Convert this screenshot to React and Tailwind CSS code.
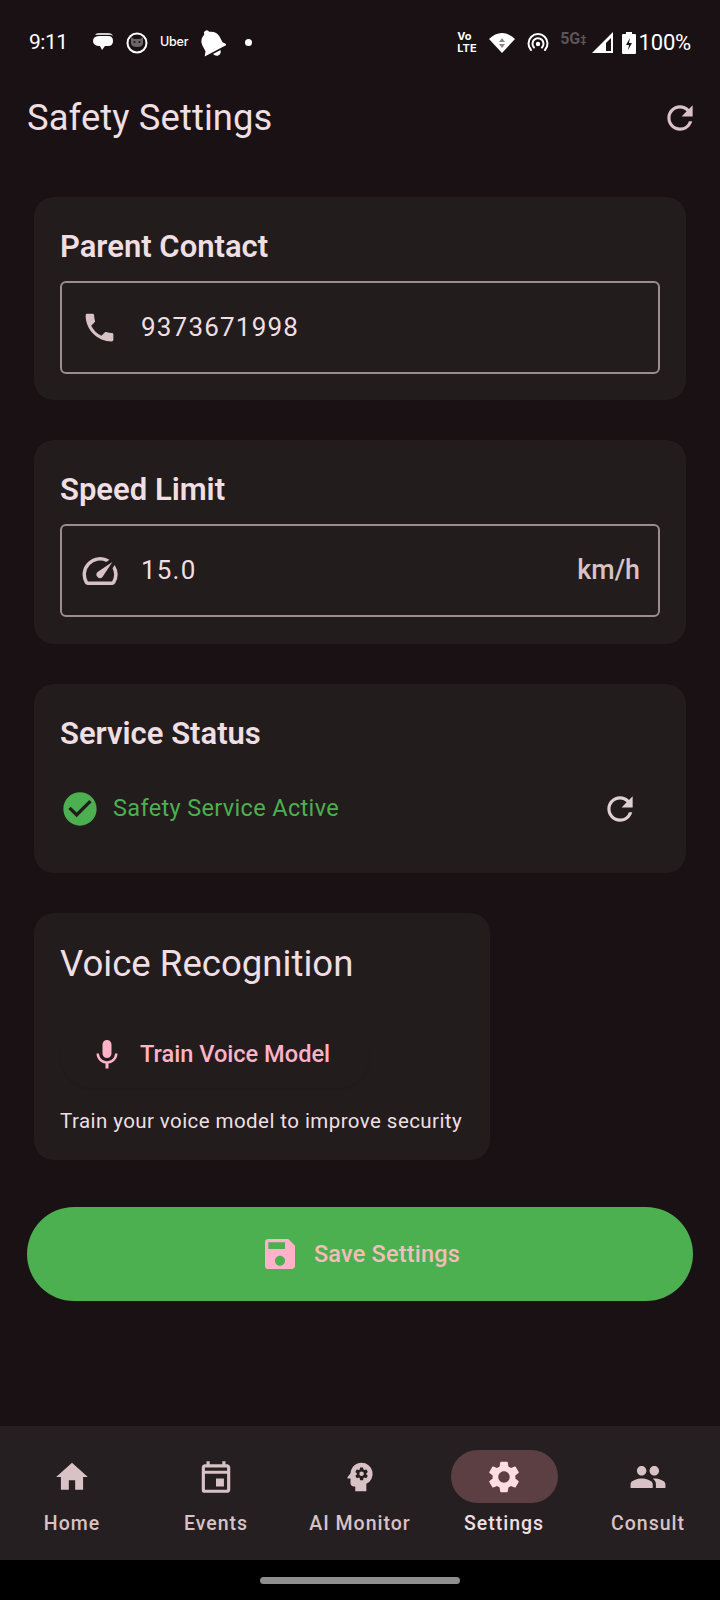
import React from 'react';
import { MdPhone, MdOutlineSpeed, MdRefresh, MdCheckCircle, MdMic, MdSave, MdHome, MdOutlineEvent, MdPsychology, MdSettings, MdPeople } from 'react-icons/md';

const NAV_ITEMS = [
    { label: 'Home', icon: MdHome },
    { label: 'Events', icon: MdOutlineEvent },
    { label: 'AI Monitor', icon: MdPsychology },
    { label: 'Settings', icon: MdSettings, active: true },
    { label: 'Consult', icon: MdPeople },
];

function StatusBar() {
    return (
        <div className="h-[84px] flex items-center justify-between pl-[29px] pr-[29px] pt-[1px] text-white shrink-0">
            <div className="flex items-center">
                <span className="text-[21px] tracking-[-0.5px] font-['Roboto',sans-serif] w-[62px]">9:11</span>
                {/* chat */}
                <svg width="23" height="22" viewBox="0 0 23 22" className="mr-[12px]">
                    <path d="M4 3 Q5 1 8 1 H17 Q21 1 22 4 L20 3 H7 Q5 3 4 3Z" fill="#fff" opacity="0.8" />
                    <path d="M9 4 H17 Q22 4 22 9 Q22 14 17 14 H14 L11 18 L9 14 Q2 14 2 9 Q2 4 9 4Z" fill="#fff" />
                </svg>
                {/* cat face */}
                <svg width="22" height="22" viewBox="0 0 22 22" className="mr-[12px]">
                    <circle cx="11" cy="11" r="9.5" fill="none" stroke="#fff" strokeWidth="2" />
                    <path d="M5 5 L8 7 H14 L17 5 L17 11 Q17 15 11 15 Q5 15 5 11Z" fill="#6a6567" />
                    <circle cx="8.5" cy="10" r="1" fill="#191114" />
                    <circle cx="13.5" cy="10" r="1" fill="#191114" />
                </svg>
                <span className="text-[12.5px] leading-none font-['Inter',sans-serif] font-medium mr-[10px] tracking-[-0.2px]">Uber</span>
                {/* bell */}
                <svg width="28" height="30" viewBox="0 0 26 28" className="mr-[19px] mt-[1px]">
                    <g transform="rotate(-28 13 14)">
                        <path d="M13 1 Q15.5 1 15.5 3.5 Q22 6 22 12 V18 L25 22 H1 L4 18 V12 Q4 6 10.5 3.5 Q10.5 1 13 1Z" fill="#fff" />
                        <path d="M9 23.5 H17 Q16 27 13 27 Q10 27 9 23.5Z" fill="#fff" />
                    </g>
                </svg>
                <span className="w-[7px] h-[7px] rounded-full bg-white" />
            </div>
            <div className="flex items-center">
                <div className="flex flex-col items-start leading-none font-bold font-['Inter',sans-serif] text-[11px] mr-[9px] w-[23px]">
                    <span className="leading-[11px]">Vo</span>
                    <span className="leading-[12px] tracking-[0.2px]">LTE</span>
                </div>
                <svg width="26" height="20" viewBox="0 0 26 20" className="mr-[12px]">
                    <path d="M13 20 L0 6 Q6 0 13 0 Q20 0 26 6Z" fill="#fff" />
                    <path d="M13 5 L16 9 H10Z M10 11 H16 L13 15Z" fill="#8b8587" />
                </svg>
                <svg width="22" height="20" viewBox="0 0 22 20" className="mr-[11px]" fill="none" stroke="#fff" strokeWidth="2" strokeLinecap="round">
                    <path d="M4 17 A9.5 9.5 0 1 1 18 17" />
                    <path d="M7 14.5 A5.5 5.5 0 1 1 15 14.5" />
                    <circle cx="11" cy="11" r="1.2" fill="#fff" />
                </svg>
                <span className="text-[16px] font-bold font-['Roboto',sans-serif] text-[#5a5558] -mt-[7px] leading-none">5G</span>
                <span className="text-[11px] font-bold font-['Roboto',sans-serif] text-[#5a5558] mr-[5px] -mt-[7px] leading-none">‡</span>
                <svg width="22" height="22" viewBox="0 0 22 22" className="mr-[8px]">
                    <path d="M21 0 V21 H0Z" fill="#fff" />
                    <path d="M19 6 V19 H14 V11Z" fill="#191114" />
                </svg>
                <svg width="14" height="22" viewBox="0 0 14 22" className="mr-[3px]">
                    <path d="M4 0 H10 V2 H13 Q14 2 14 3 V21 Q14 22 13 22 H1 Q0 22 0 21 V3 Q0 2 1 2 H4Z" fill="#fff" />
                    <path d="M8 6 L4 13 H7 L6 18 L10 11 H7Z" fill="#191114" />
                </svg>
                <span className="text-[22px] font-['Roboto',sans-serif] tracking-[-0.2px]">100%</span>
            </div>
        </div>
    );
}

function Card({ title, children, className = '' }) {
    return (
        <div className={`bg-[#221c1d] rounded-[20px] px-[26px] ${className}`}>
            <h2 className="text-[31px] leading-[40px] font-semibold text-[#efdfe2] pt-[30px] box-content">{title}</h2>
            {children}
        </div>
    );
}

function OutlinedField({ icon: Icon, value, suffix, iconSize = 37 }) {
    return (
        <div className="mt-[14px] h-[93px] border-2 border-[#9d8c8f] rounded-[6px] flex items-center pl-[19px] pr-[18px]">
            <div className="w-[37px] flex justify-center shrink-0">
                <Icon size={iconSize} className="text-[#d8c2c6] shrink-0" />
            </div>
            <span className="ml-[23px] text-[26px] tracking-[1.2px] text-[#efdfe2]">{value}</span>
            {suffix && <span className="ml-auto text-[26.8px] font-medium text-[#d8c2c6]">{suffix}</span>}
        </div>
    );
}

export default function App() {
    return (
        <div className="w-[720px] h-[1600px] flex flex-col bg-[#191114] font-['Roboto',sans-serif] overflow-hidden">
            <StatusBar />

            <div className="flex items-center justify-between px-[27px] h-[64px] mt-[2px] shrink-0">
                <h1 className="text-[36.4px] text-[#efdfe2] leading-none tracking-[0.1px]">Safety Settings</h1>
                <MdRefresh size={38} className="text-[#d8c2c6] mr-[-6px]" />
            </div>

            <main className="flex-1 flex flex-col pt-[47px]">
                <div className="px-[34px] flex flex-col gap-[40px]">
                    <Card title="Parent Contact" className="pb-[26px]">
                        <OutlinedField icon={MdPhone} value="9373671998" />
                    </Card>
                    <Card title="Speed Limit" className="pb-[27px]">
                        <OutlinedField icon={MdOutlineSpeed} value="15.0" suffix="km/h" iconSize={42} />
                    </Card>
                    <Card title="Service Status" className="pb-[32px]">
                        <div className="mt-[23px] flex items-center h-[64px]">
                            <MdCheckCircle size={40} className="text-[#4caf50] shrink-0" />
                            <span className="ml-[13px] text-[23.5px] tracking-[0.35px] text-[#4caf50]">Safety Service Active</span>
                            <MdRefresh size={38} className="ml-auto mr-[21px] text-[#e0d0d3]" />
                        </div>
                    </Card>
                    <div className="bg-[#221c1d] rounded-[20px] px-[26px] w-[456px] h-[247px]">
                        <h2 className="text-[36.6px] leading-[44px] text-[#efdfe2] pt-[29px] box-content">Voice Recognition</h2>
                        <div className="mt-[36px] h-[66px] flex items-center pl-[29px] w-[310px] rounded-full shadow-[0_2px_2px_rgba(0,0,0,0.07)]">
                            <MdMic size={36} className="text-[#ffb2c8] shrink-0" />
                            <span className="ml-[15px] text-[23.6px] font-medium text-[#ffb2c8]">Train Voice Model</span>
                        </div>
                        <p className="mt-[18px] text-[20.5px] tracking-[0.43px] text-[#efdfe2] whitespace-nowrap">Train your voice model to improve security</p>
                    </div>
                </div>

                <div className="px-[27px] mt-[47px]">
                    <button className="w-full h-[94px] rounded-full bg-[#4caf50] flex items-center justify-center">
                        <MdSave size={40} className="text-[#ffb2c8]" />
                        <span className="ml-[14px] mt-[2px] text-[23.5px] font-medium tracking-[0.2px] text-[#f4bdb9]">Save Settings</span>
                    </button>
                </div>
            </main>

            <nav className="h-[134px] bg-[#261f21] flex items-start justify-between shrink-0 pt-[24px]">
                {NAV_ITEMS.map(({ label, icon: Icon, active }) => (
                    <div key={label} className="flex-1 flex flex-col items-center">
                        <div className={`w-[107px] h-[53px] rounded-full flex items-center justify-center ${active ? 'bg-[#5b3f43]' : ''}`}>
                            <Icon size={38} className={active ? 'text-[#ffdde2]' : 'text-[#d8c2c6]'} />
                        </div>
                        <span className={`mt-[6px] text-[19.5px] font-medium tracking-[1px] ${active ? 'text-[#efdfe2]' : 'text-[#d8c2c6]'}`}>{label}</span>
                    </div>
                ))}
            </nav>

            <div className="h-[40px] bg-black flex items-center justify-center shrink-0">
                <div className="w-[200px] h-[7px] rounded-full bg-[#8e8e8e]" />
            </div>
        </div>
    );
}
